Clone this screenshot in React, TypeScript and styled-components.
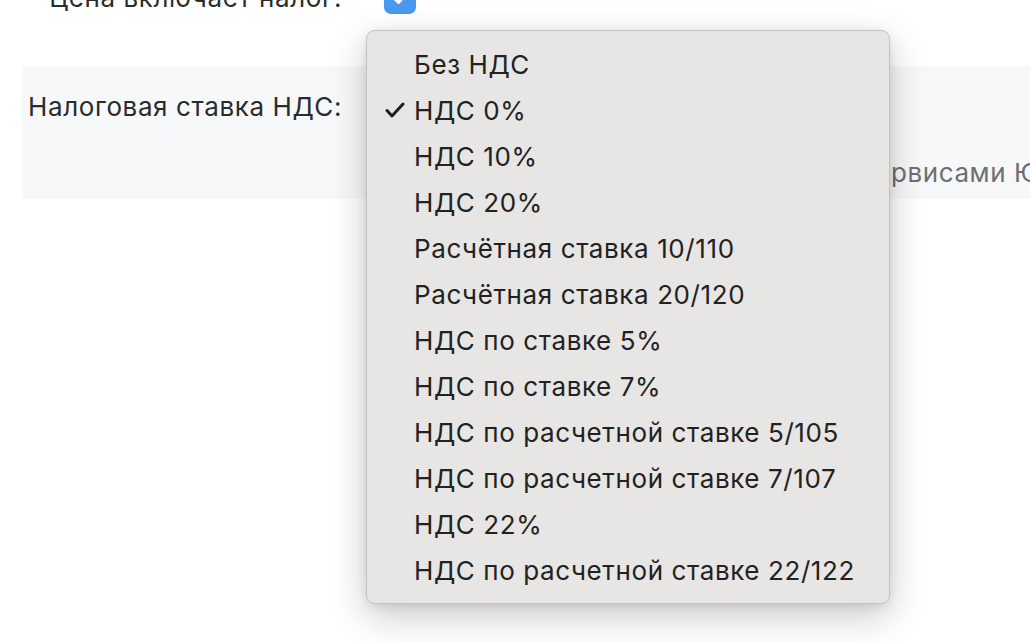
import React from "react";
import styled, { createGlobalStyle } from "styled-components";

const Global = createGlobalStyle`
  html, body { margin: 0; padding: 0; background: #ffffff; overflow: hidden; }
  body { font-family: Inter, "Liberation Sans", Arial, sans-serif; color: #2b2b2b; }
`;

const Page = styled.div`
  margin-top: -18px;
  width: 1030px;
  height: 660px;
  overflow: hidden;
`;

const FormRow = styled.div`
  display: grid;
  grid-template-columns: 320px 1fr;
  column-gap: 42px;
  align-items: center;
  margin-left: 22px;
  height: 32px;
`;

const Label = styled.div`
  font-size: 26px;
  letter-spacing: 0.6px;
  line-height: 32px;
  text-align: right;
  white-space: nowrap;
  color: #2b2b2b;
`;

const Checkbox = styled.div`
  width: 32px;
  height: 32px;
  border-radius: 7px;
  background: #4a98ef;
  display: flex;
  align-items: center;
  justify-content: center;
`;

const Panel = styled.div`
  margin-top: 52px;
  margin-left: 22px;
  height: 133px;
  background: #f7f8fa;
  display: grid;
  grid-template-columns: 320px 1fr;
  column-gap: 42px;
  padding-top: 25px;
  box-sizing: border-box;
  white-space: nowrap;
`;

const Field = styled.div`
  position: relative;
  display: flex;
  flex-direction: column;
`;

const SelectBox = styled.div`
  width: 380px;
  height: 44px;
  border: 1px solid #cfd3d8;
  border-radius: 6px;
  background: #fff;
`;

const Help = styled.div`
  margin-top: 20px;
  font-size: 26px;
  letter-spacing: 0.6px;
  line-height: 32px;
  color: #6f6f6f;
`;

const Menu = styled.div`
  position: absolute;
  left: -18px;
  top: -61px;
  width: 524px;
  box-sizing: border-box;
  padding: 10px 0;
  background: #e7e6e4;
  border: 1px solid #c3c2c0;
  border-radius: 9px;
  box-shadow: 0 12px 36px rgba(0, 0, 0, 0.22), 0 2px 8px rgba(0, 0, 0, 0.08);
  z-index: 5;
`;

const Item = styled.div`
  display: flex;
  align-items: center;
  height: 46px;
  padding-left: 18px;
  font-size: 26px;
  letter-spacing: 0.6px;
  color: #222222;
`;

const Tick = styled.span`
  width: 29px;
  display: flex;
  align-items: center;
`;

const options = [
  "Без НДС",
  "НДС 0%",
  "НДС 10%",
  "НДС 20%",
  "Расчётная ставка 10/110",
  "Расчётная ставка 20/120",
  "НДС по ставке 5%",
  "НДС по ставке 7%",
  "НДС по расчетной ставке 5/105",
  "НДС по расчетной ставке 7/107",
  "НДС 22%",
  "НДС по расчетной ставке 22/122",
];

export default function App() {
  return (
    <>
      <Global />
      <Page>
        <FormRow>
          <Label>Цена включает налог:</Label>
          <Checkbox>
            <svg width="20" height="20" viewBox="0 0 20 20">
              <polyline points="4,10 8.5,14.5 16,6" fill="none" stroke="#fff" strokeWidth="3" strokeLinecap="round" strokeLinejoin="round" />
            </svg>
          </Checkbox>
        </FormRow>
        <Panel>
          <Label>Налоговая ставка НДС:</Label>
          <Field>
            <SelectBox />
            <Help>Используется в обмене данными с сервисами ЮKassa</Help>
            <Menu>
              {options.map((o, i) => (
                <Item key={o}>
                  <Tick>
                    {i === 1 && (
                      <svg width="20" height="16" viewBox="0 0 20 16">
                        <polyline points="2,8.5 7,14 18,2" fill="none" stroke="#1f1f1f" strokeWidth="3" strokeLinecap="round" strokeLinejoin="round" />
                      </svg>
                    )}
                  </Tick>
                  {o}
                </Item>
              ))}
            </Menu>
          </Field>
        </Panel>
      </Page>
    </>
  );
}
